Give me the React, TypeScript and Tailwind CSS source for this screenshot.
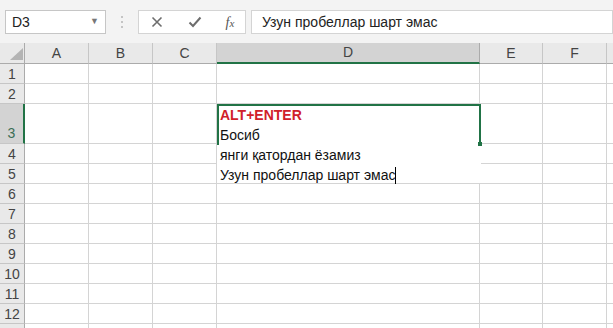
import React from 'react';

const cols = [
  { key: 'A', w: 'w-[64px]' },
  { key: 'B', w: 'w-[64px]' },
  { key: 'C', w: 'w-[64px]' },
  { key: 'D', w: 'w-[263px]' },
  { key: 'E', w: 'w-[63px]' },
  { key: 'F', w: 'w-[64px]' },
  { key: '', w: 'w-[64px]' },
];

const rows = [
  { n: 1, h: 'h-[20px]' },
  { n: 2, h: 'h-[20px]' },
  { n: 3, h: 'h-[40px]' },
  { n: 4, h: 'h-[20px]' },
  { n: 5, h: 'h-[20px]' },
  { n: 6, h: 'h-[20px]' },
  { n: 7, h: 'h-[20px]' },
  { n: 8, h: 'h-[20px]' },
  { n: 9, h: 'h-[20px]' },
  { n: 10, h: 'h-[20px]' },
  { n: 11, h: 'h-[20px]' },
  { n: 12, h: 'h-[20px]' },
  { n: 13, h: 'h-[20px]' },
];

function FormulaBar() {
  return (
    <div className="h-[43px] bg-[#f3f3f3] flex items-start pt-[10px] pl-[5px]">
      <div className="w-[101px] h-[24px] bg-white border border-[#c6c6c6] flex items-center justify-between pl-[6px] pr-[6px]">
        <span className="text-[14px] text-[#222]">D3</span>
        <span className="text-[9px] text-[#777]">▼</span>
      </div>
      <div className="w-[32px] h-[24px] flex flex-col items-center justify-center gap-[3px]">
        <span className="w-[2px] h-[2px] bg-[#c4c4c4]" />
        <span className="w-[2px] h-[2px] bg-[#c4c4c4]" />
        <span className="w-[2px] h-[2px] bg-[#c4c4c4]" />
      </div>
      <div className="w-[108px] h-[24px] bg-white border border-[#d4d4d4] flex items-center">
        <div className="w-[36px] flex justify-center">
          <svg width="12" height="12" viewBox="0 0 12 12">
            <path d="M1.5 1.5 L10.5 10.5 M10.5 1.5 L1.5 10.5" stroke="#6d6d6d" strokeWidth="1.6" />
          </svg>
        </div>
        <div className="w-[40px] flex justify-center">
          <svg width="14" height="12" viewBox="0 0 14 12">
            <path d="M1.5 6.5 L5 10 L12.5 1.5" stroke="#6d6d6d" strokeWidth="2" fill="none" />
          </svg>
        </div>
        <div className="w-[30px] flex justify-center">
          <span className="text-[14px] italic text-[#555] font-['Liberation_Serif',serif]">
            f<span className="text-[11px]">x</span>
          </span>
        </div>
      </div>
      <div className="ml-[5px] flex-1 h-[24px] bg-white border border-[#d4d4d4] flex items-center pl-[10px]">
        <span className="text-[14px] text-[#222]">Узун пробеллар шарт эмас</span>
      </div>
    </div>
  );
}

function HeaderRow() {
  return (
    <div className="flex h-[21px] bg-[#e9e9e9]">
      <div className="w-[25px] shrink-0 border-r border-b border-[#ababab] relative">
        <svg className="absolute left-[10px] top-[5px]" width="13" height="12" viewBox="0 0 13 12">
          <polygon points="13,0 13,12 0,12" fill="#b4b4b4" />
        </svg>
      </div>
      {cols.map((c, i) =>
        c.key === 'D' ? (
          <div
            key={i}
            className={`${c.w} shrink-0 bg-[#d3d3d3] border-r border-[#ababab] border-b-2 border-b-[#217346] flex items-center justify-center text-[14px] text-[#444]`}
          >
            {c.key}
          </div>
        ) : (
          <div
            key={i}
            className={`${c.w} shrink-0 border-r border-b border-[#c6c6c6] border-b-[#ababab] flex items-center justify-center text-[14px] text-[#444]`}
          >
            {c.key}
          </div>
        )
      )}
    </div>
  );
}

function EditOverlay() {
  return (
    <div className="absolute left-[217px] top-[61px] w-[264px] h-[79px] bg-white">
      <div className="absolute left-0 top-0 w-[264px] h-[41px] border-l-2 border-t-2 border-r-2 border-[#217346]" />
      <div className="absolute right-[-1px] top-[38px] w-[4px] h-[4px] bg-[#217346]" />
      <div className="relative pl-[3px] pt-[1px] text-[14px] leading-[20px] text-[#111]">
        <div className="font-bold text-[#d0202a]">ALT+ENTER</div>
        <div>Босиб</div>
        <div>янги қатордан ёзамиз</div>
        <div className="flex items-center">
          <span>Узун пробеллар шарт эмас</span>
          <span className="w-[1px] h-[17px] bg-black" />
        </div>
      </div>
    </div>
  );
}

function Grid() {
  return (
    <div className="relative">
      <HeaderRow />
      {rows.map((r) => {
        const sel = r.n === 3;
        return (
          <div key={r.n} className={`flex ${r.h}`}>
            <div
              className={`w-[25px] shrink-0 flex justify-center text-[14px] leading-[20px] border-b border-[#c6c6c6] ${
                sel
                  ? 'bg-[#d3d3d3] items-end border-r-2 border-r-[#217346] text-[#3b6e56]'
                  : 'bg-[#e9e9e9] items-center border-r border-r-[#ababab] text-[#444]'
              }`}
            >
              {r.n < 13 ? r.n : ''}
            </div>
            {cols.map((c, i) => (
              <div key={i} className={`${c.w} shrink-0 border-r border-b border-[#d4d4d4]`} />
            ))}
          </div>
        );
      })}
      <EditOverlay />
    </div>
  );
}

export default function App() {
  return (
    <div className="w-[613px] h-[328px] overflow-hidden bg-white font-['Liberation_Sans',Arial,sans-serif]">
      <FormulaBar />
      <Grid />
    </div>
  );
}
